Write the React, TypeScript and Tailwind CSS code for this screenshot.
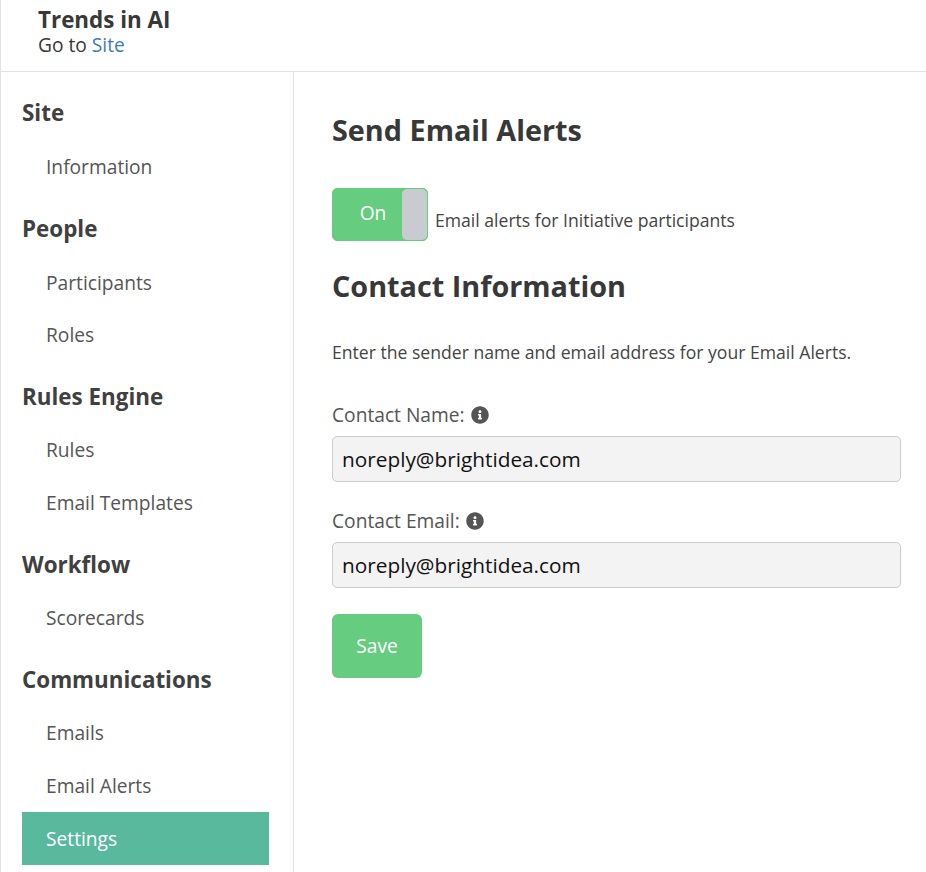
import { FaInfoCircle } from "react-icons/fa";

const font = { fontFamily: '"Open Sans", sans-serif' };

const nav = [
  { title: "Site", items: ["Information"] },
  { title: "People", items: ["Participants", "Roles"] },
  { title: "Rules Engine", items: ["Rules", "Email Templates"] },
  { title: "Workflow", items: ["Scorecards"] },
  { title: "Communications", items: ["Emails", "Email Alerts", "Settings"] },
];

const Field = ({ label }: { label: string }) => (
  <div className="flex flex-col">
    <label className="flex items-center h-[24px] text-[19.2px] text-[#555555]">
      {label}
      <FaInfoCircle className="ml-[6px] shrink-0 text-[18px] text-[#555555]" />
    </label>
    <input
      readOnly
      value="noreply@brightidea.com"
      className="mt-[9px] h-[46px] w-[569px] rounded-[5px] border border-[#cccccc] bg-[#f3f3f3] px-[9px] text-[20.8px] text-[#111111] outline-none"
    />
  </div>
);

export default function App() {
  return (
    <div className="h-[872px] w-[926px] overflow-hidden bg-white text-[#383838]" style={font}>
      <header className="h-[72px] border-b border-l border-[#e2e2e2] pl-[37px] pt-[6px]">
        <h1 className="text-[22.4px] font-bold leading-[28px]">Trends in AI</h1>
        <p className="text-[19.2px] leading-[22px]">
          Go to <a className="text-[#3f7ab8]">Site</a>
        </p>
      </header>
      <div className="flex h-[800px]">
        <aside className="w-[294px] shrink-0 border-r border-l border-[#e2e2e2] pl-[21px] pr-[24px] pt-[6.5px]">
          {nav.map((group) => (
            <div key={group.title}>
              <h2
                className={
                  group.title === "Site"
                    ? "flex h-[62.4px] items-center pt-[6px] text-[22.4px] font-bold text-[#404040]"
                    : "flex h-[62.4px] items-center pt-[8px] text-[22.4px] font-bold text-[#404040]"
                }
              >
                {group.title}
              </h2>
              {group.items.map((item) =>
                item === "Settings" ? (
                  <a key={item} className="flex h-[52.75px] items-center bg-[#59b99c] pl-[24px] pt-[1px] text-[19.2px] text-white">
                    {item}
                  </a>
                ) : (
                  <a key={item} className="flex h-[52.75px] items-center pl-[24px] pt-[1px] text-[19.2px] text-[#555555]">
                    {item}
                  </a>
                )
              )}
            </div>
          ))}
        </aside>
        <main className="flex-1 pl-[38px] pt-[39px]">
          <h2 className="text-[28.8px] font-bold leading-[38px]">Send Email Alerts</h2>
          <div className="mt-[39px] flex items-end">
            <div className="flex h-[53px] w-[96px] overflow-hidden rounded-[5px] border border-[#66cc7f] bg-[#66cc7f]">
              <span className="flex flex-1 items-center justify-center pb-[3px] pl-[11px] text-[19.2px] text-white">On</span>
              <span className="w-[25px] rounded-[5px] bg-[#c8ccd0]" />
            </div>
            <span className="ml-[7px] pb-[9px] text-[17.6px] leading-[24px] text-[#444444]">Email alerts for Initiative participants</span>
          </div>
          <h2 className="mt-[26px] text-[28.8px] font-bold leading-[38px]">Contact Information</h2>
          <p className="mt-[35px] text-[17.6px] leading-[24px] text-[#444444]">
            Enter the sender name and email address for your Email Alerts.
          </p>
          <div className="mt-[39px] flex flex-col gap-[27px]">
            <Field label="Contact Name:" />
            <Field label="Contact Email:" />
          </div>
          <button className="mt-[26px] h-[64px] w-[90px] rounded-[6px] bg-[#66cc7f] text-[19.2px] font-normal text-white">
            Save
          </button>
        </main>
      </div>
    </div>
  );
}
